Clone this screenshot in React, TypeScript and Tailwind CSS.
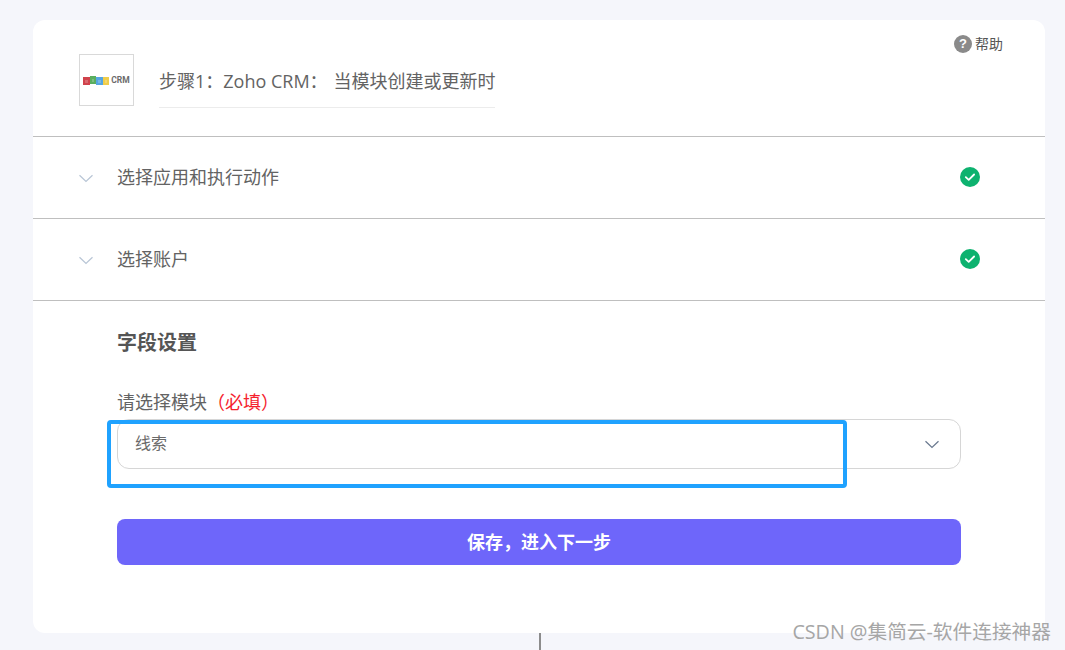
const fontStack = "font-['Open_Sans','Noto_Sans_CJK_SC',sans-serif]";

function Chevron({ className }: { className: string }) {
  return (
    <svg width="16" height="9" viewBox="0 0 16 9" fill="none" className={className}>
      <path d="M1.5 1.2L8 7.4l6.5-6.2" stroke="currentColor" strokeWidth="1.3" />
    </svg>
  );
}

function ZohoLogo() {
  return (
    <div className="w-[55px] h-[52px] shrink-0 border border-[#d9d9d9] bg-white flex items-center justify-center gap-[2px] pt-px">
      <svg width="26" height="9" viewBox="0 0 26 9" className="blur-[0.6px]">
        <rect x="0" y="1" width="7" height="8" fill="#d0434c" />
        <rect x="7" y="0" width="6" height="8" fill="#5aae5f" />
        <rect x="13" y="1" width="7" height="8" fill="#55a5e2" />
        <rect x="20" y="1" width="6" height="8" fill="#f0cd4a" />
        <path d="M2 4h3v3H2zM9 3h2v3H9zM15 4h3v3h-3zM22 4h2v3h-2z" fill="#fff" fillOpacity="0.2" />
      </svg>
      <span className="text-[8.5px] leading-none font-bold text-[#6b6b6b] font-['Roboto',sans-serif]">CRM</span>
    </div>
  );
}

function CheckBadge() {
  return (
    <svg width="20" height="20" viewBox="0 0 20 20" className="mb-[2px]">
      <circle cx="10" cy="10" r="10" fill="#0db26f" />
      <path d="M5.8 10.2l2.9 2.7 5.4-5.4" fill="none" stroke="#fff" strokeWidth="1.8" strokeLinecap="round" strokeLinejoin="round" />
    </svg>
  );
}

function StepRow({ label }: { label: string }) {
  return (
    <div className="h-[82px] border-b border-[#bfbfbf] flex items-center pl-[45px] pr-[65px]">
      <Chevron className="text-[#b9c6d6] mt-px" />
      <span className="ml-[23px] flex-1 text-[18px] leading-none text-[#636363] pb-px">{label}</span>
      <CheckBadge />
    </div>
  );
}

export default function App() {
  return (
    <div className={`relative h-[650px] w-full overflow-hidden bg-[#f5f6fb] pt-[20px] pl-[33px] pr-[20px] ${fontStack}`}>
      <div className="h-[613px] bg-white rounded-xl overflow-hidden">
        {/* Header */}
        <div className="relative h-[117px] border-b border-[#bfbfbf] flex items-start pl-[46px] pt-[34px]">
          <ZohoLogo />
          <div className="ml-[25px] w-[336px] h-[54px] border-b border-[#ececec] pt-[14px]">
            <div className="text-[18px] leading-[26px] text-[#636363] whitespace-nowrap">
              步骤1：Zoho CRM：<span className="ml-[6px]">当模块创建或更新时</span>
            </div>
          </div>
          <div className="absolute right-[42px] top-[14px] flex items-center gap-[3px]">
            <span className="w-[18px] h-[18px] rounded-full bg-[#8a8a8a] text-white text-[13px] font-bold leading-[18px] text-center font-['Liberation_Sans',sans-serif]">?</span>
            <span className="text-[14px] leading-[20px] text-[#555]">帮助</span>
          </div>
        </div>

        <StepRow label="选择应用和执行动作" />
        <StepRow label="选择账户" />

        {/* Field settings */}
        <div className="pl-[84px] pr-[84px] pt-[28px]">
          <h3 className="text-[20px] leading-[28px] font-bold text-[#555]">字段设置</h3>
          <div className="mt-[32px] text-[18px] leading-[26px] text-[#636363]">
            请选择模块<span className="text-[#f5222d]">（必填）</span>
          </div>
          <div className="mt-[4px] h-[50px] rounded-xl border border-[#d6d6d6] flex items-center justify-between pl-[17px] pr-[20px]">
            <span className="text-[16px] leading-none text-[#6a6a6a] pb-[3px]">线索</span>
            <Chevron className="text-[#6b7a90]" />
          </div>
          <button className="mt-[50px] w-full h-[46px] rounded-lg bg-[#6e66fa] text-white text-[18px] font-bold">保存，进入下一步</button>
        </div>
      </div>

      {/* connector below the card */}
      <div className="absolute left-[539px] top-[633px] w-[2px] h-[17px] bg-[#8c8c8c]" />
      {/* annotation box */}
      <div className="absolute left-[107px] top-[420px] w-[740px] h-[68px] rounded-[4px] border-[4px] border-[#1fa2ff]" />
      {/* watermark */}
      <div className="absolute right-[14px] top-[619px] text-[19.7px] leading-[26px] text-[#a6a6a6] whitespace-nowrap">CSDN @集简云-软件连接神器</div>
    </div>
  );
}
